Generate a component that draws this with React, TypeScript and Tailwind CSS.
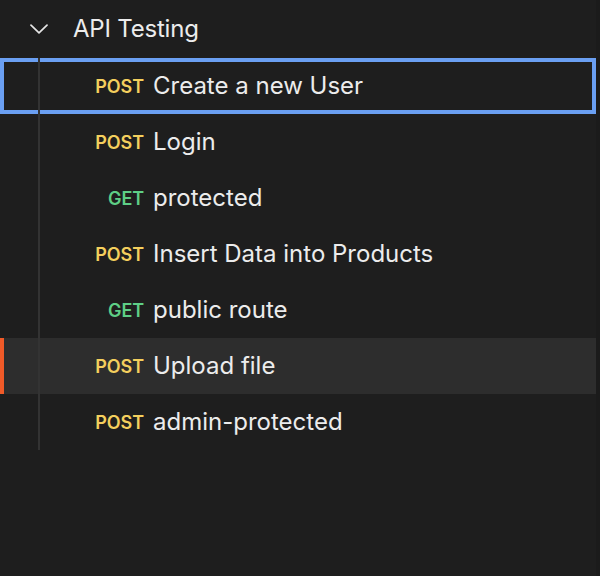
type Req = { method: 'GET' | 'POST'; name: string; selected?: boolean; active?: boolean };

const requests: Req[] = [
  { method: 'POST', name: 'Create a new User', selected: true },
  { method: 'POST', name: 'Login' },
  { method: 'GET', name: 'protected' },
  { method: 'POST', name: 'Insert Data into Products' },
  { method: 'GET', name: 'public route' },
  { method: 'POST', name: 'Upload file', active: true },
  { method: 'POST', name: 'admin-protected' },
];

function RequestRow({ req }: { req: Req }) {
  const state = req.selected
    ? 'border-4 border-[#6a9ff2] pl-[86px]'
    : req.active
    ? 'bg-[#2d2d2d] pl-[90px]'
    : 'pl-[90px]';
  return (
    <div className={`relative flex items-center h-[56px] ${state}`}>
      {req.active && <span className="absolute left-0 top-0 bottom-0 w-[4px] bg-[#f05a28]" />}
      <span
        className={`w-[54px] text-right text-[18px] font-semibold tracking-[-0.1px] ${
          req.method === 'POST' ? 'text-[#f4cf5d]' : 'text-[#5ecf86]'
        }`}
      >
        {req.method}
      </span>
      <span className="ml-[9px] text-[24px] text-[#ececec]">{req.name}</span>
    </div>
  );
}

function Chevron() {
  return (
    <svg width="18" height="10" viewBox="0 0 18 10" fill="none" stroke="#e6e6e6" strokeWidth="1.7" strokeLinecap="round" strokeLinejoin="round">
      <polyline points="1,1.2 9,8.8 17,1.2" />
    </svg>
  );
}

export default function App() {
  return (
    <div className="flex w-[600px] h-[576px] bg-[#1e1e1e]" style={{ fontFamily: 'Inter, "Noto Sans", sans-serif' }}>
      <div className="w-[596px]">
        {/* Collection header */}
        <div className="flex items-center h-[58px] pl-[30px]">
          <Chevron />
          <span className="ml-[25px] text-[24px] tracking-[-0.2px] text-[#ececec]">API Testing</span>
        </div>

        {/* Requests */}
        <div className="relative">
          <span className="absolute left-[38px] top-0 bottom-0 w-[2px] bg-[#333333] z-10" />
          {requests.map((r) => (
            <RequestRow key={r.name} req={r} />
          ))}
        </div>
      </div>
      <div className="w-[4px] bg-[#1b1b1b]" />
    </div>
  );
}
